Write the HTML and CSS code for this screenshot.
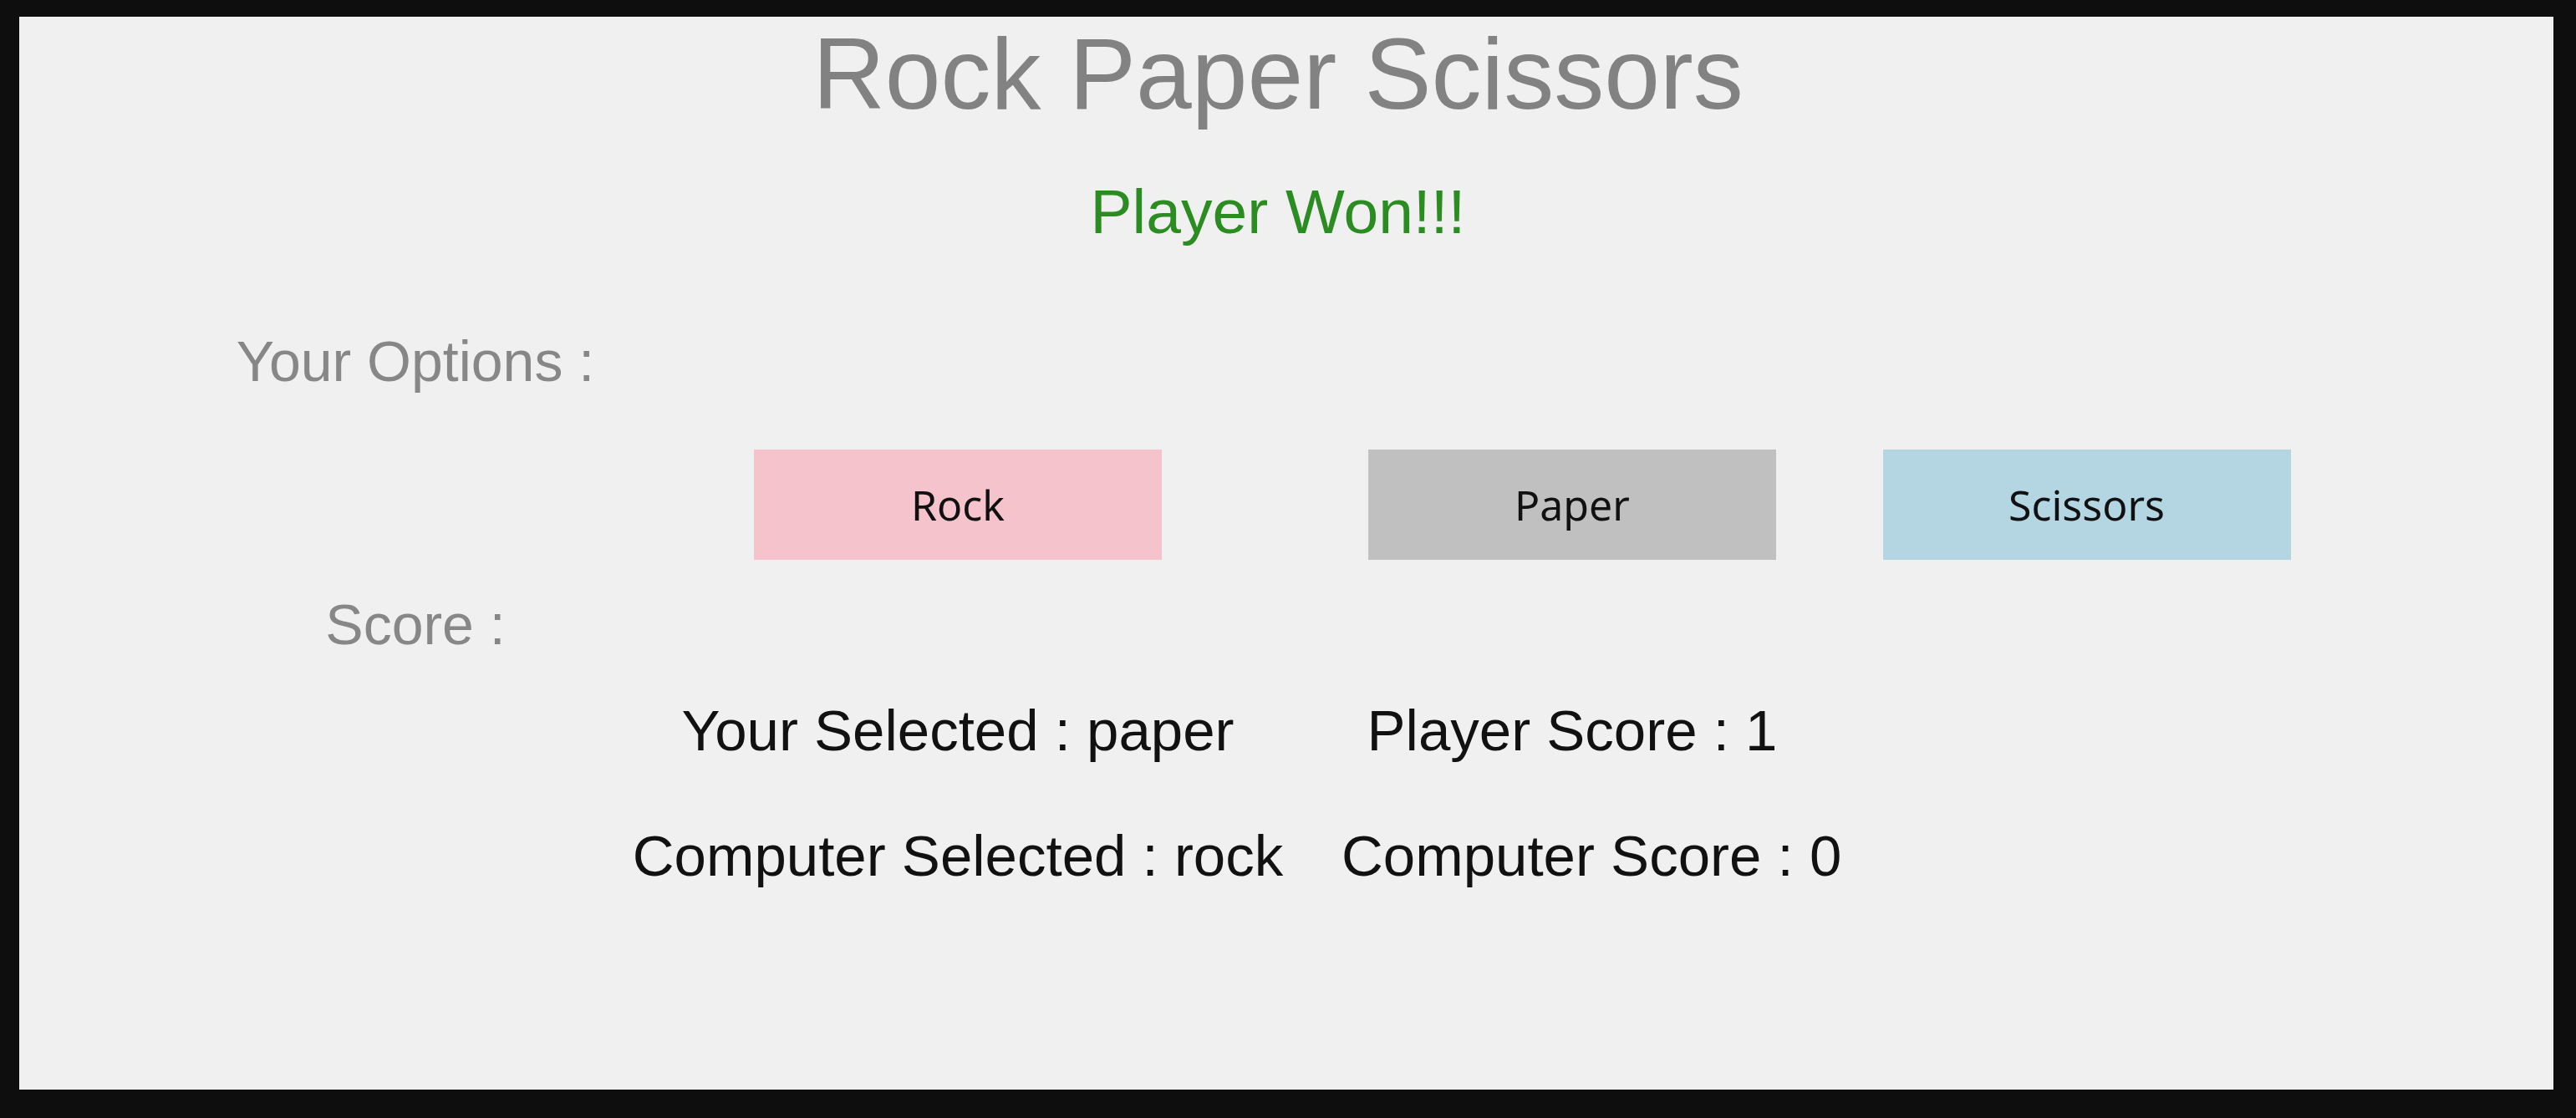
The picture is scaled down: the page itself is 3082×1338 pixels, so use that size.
FILE: index.html
```html
<!DOCTYPE html>
<html lang="en">
<head>
<meta charset="utf-8">
<title>Rock Paper Scissors</title>
<link rel="stylesheet" href="styles.css">
</head>
<body>
<main class="app">
  <header class="head">
    <h1 class="title">Rock Paper Scissors</h1>
    <p class="result">Player Won!!!</p>
  </header>
  <section class="board">
    <div class="row row-options">
      <div class="label">Your Options :</div>
    </div>
    <div class="row row-buttons">
      <div></div>
      <button class="choice choice-rock" type="button">Rock</button>
      <button class="choice choice-paper" type="button">Paper</button>
      <button class="choice choice-scissors" type="button">Scissors</button>
    </div>
    <div class="row row-score">
      <div class="label">Score :</div>
    </div>
    <div class="row row-player">
      <div></div>
      <div class="stat">Your Selected : paper</div>
      <div class="stat">Player Score : 1</div>
    </div>
    <div class="row row-computer">
      <div></div>
      <div class="stat">Computer Selected : rock</div>
      <div class="stat stat-shift">Computer Score : 0</div>
    </div>
  </section>
</main>
</body>
</html>
```
FILE: styles.css
```css
html, body {
  margin: 0;
  padding: 0;
}

body {
  background: #0e0e0e;
  width: 3082px;
  height: 1338px;
  overflow: hidden;
  font-family: "Liberation Sans", Arial, sans-serif;
}

.app {
  margin: 20px 27px 0 23px;
  height: 1284px;
  background: #f0f0f0;
  padding-top: 8px;
  box-sizing: border-box;
}

.head {
  padding-right: 20px;
  text-align: center;
}

.title {
  margin: 0;
  font-weight: normal;
  font-size: 120px;
  line-height: 1;
  color: #828282;
}

.result {
  margin: 68px 0 0;
  font-size: 75px;
  line-height: 1;
  color: #2b8c22;
}

.board {
  margin-left: 216px;
}

.row {
  display: grid;
  grid-template-columns: 516px 782px 688px 543px;
  align-items: start;
}

.row > * {
  justify-self: center;
}

.row-options { margin-top: 107px; }
.row-buttons { margin-top: 72px; }
.row-score { margin-top: 43px; }
.row-player { margin-top: 59px; }
.row-computer { margin-top: 81px; }

.label {
  font-size: 68px;
  line-height: 1;
  color: #878787;
  white-space: nowrap;
}

.stat {
  font-size: 69px;
  line-height: 1;
  color: #111111;
  white-space: nowrap;
}

.stat-shift {
  justify-self: start;
  margin-left: 68px;
}

.choice {
  width: 488px;
  height: 132px;
  border: 0;
  padding: 0;
  margin: 0;
  display: flex;
  align-items: center;
  justify-content: center;
  font-family: "Noto Sans", "Open Sans", sans-serif;
  font-size: 50px;
  line-height: 1;
  color: #111111;
}

.choice-rock { background: #f5c3cc; }
.choice-paper { background: #c0c0c0; }
.choice-scissors { background: #b4d6e2; }
```
